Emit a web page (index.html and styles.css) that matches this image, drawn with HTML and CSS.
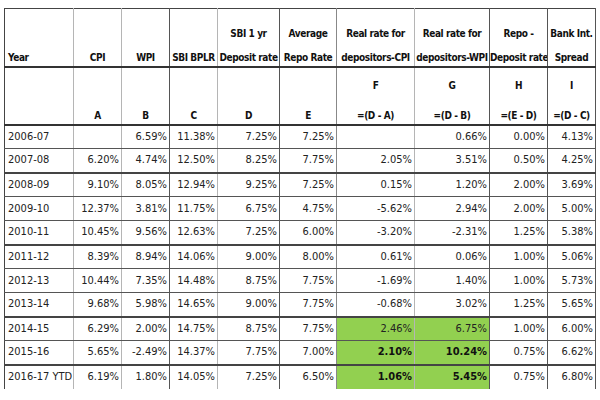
FILE: index.html
```html
<!DOCTYPE html>
<html>
<head>
<meta charset="utf-8">
<link rel="stylesheet" href="styles.css">
</head>
<body>
<div class="wrap">
<table class="grid">
  <colgroup>
    <col class="c-year"><col class="c-48"><col class="c-48"><col class="c-48"><col class="c-62"><col class="c-57"><col class="c-78"><col class="c-75"><col class="c-58"><col class="c-48">
  </colgroup>
  <thead>
    <tr class="h1">
      <th class="left"><span class="ln">Year</span></th>
      <th><span class="ln">CPI</span></th>
      <th><span class="ln">WPI</span></th>
      <th><span class="ln">SBI BPLR</span></th>
      <th><span class="ln">SBI 1 yr</span><span class="ln">Deposit rate</span></th>
      <th><span class="ln">Average</span><span class="ln">Repo Rate</span></th>
      <th><span class="ln">Real rate for</span><span class="ln">depositors-CPI</span></th>
      <th><span class="ln">Real rate for</span><span class="ln">depositors-WPI</span></th>
      <th><span class="ln">Repo -</span><span class="ln">Deposit rate</span></th>
      <th><span class="ln">Bank Int.</span><span class="ln">Spread</span></th>
    </tr>
    <tr class="h2">
      <th></th>
      <th><span class="ln">A</span></th>
      <th><span class="ln">B</span></th>
      <th><span class="ln">C</span></th>
      <th><span class="ln">D</span></th>
      <th><span class="ln">E</span></th>
      <th><span class="ln">F</span><span class="ln">=(D - A)</span></th>
      <th><span class="ln">G</span><span class="ln">=(D - B)</span></th>
      <th><span class="ln">H</span><span class="ln">=(E - D)</span></th>
      <th><span class="ln">I</span><span class="ln">=(D - C)</span></th>
    </tr>
  </thead>
  <tbody>
    <tr><td>2006-07</td><td></td><td>6.59%</td><td>11.38%</td><td>7.25%</td><td>7.25%</td><td></td><td>0.66%</td><td>0.00%</td><td>4.13%</td></tr>
    <tr class="thick"><td>2007-08</td><td>6.20%</td><td>4.74%</td><td>12.50%</td><td>8.25%</td><td>7.75%</td><td>2.05%</td><td>3.51%</td><td>0.50%</td><td>4.25%</td></tr>
    <tr><td>2008-09</td><td>9.10%</td><td>8.05%</td><td>12.94%</td><td>9.25%</td><td>7.25%</td><td>0.15%</td><td>1.20%</td><td>2.00%</td><td>3.69%</td></tr>
    <tr><td>2009-10</td><td>12.37%</td><td>3.81%</td><td>11.75%</td><td>6.75%</td><td>4.75%</td><td>-5.62%</td><td>2.94%</td><td>2.00%</td><td>5.00%</td></tr>
    <tr class="thick"><td>2010-11</td><td>10.45%</td><td>9.56%</td><td>12.63%</td><td>7.25%</td><td>6.00%</td><td>-3.20%</td><td>-2.31%</td><td>1.25%</td><td>5.38%</td></tr>
    <tr><td>2011-12</td><td>8.39%</td><td>8.94%</td><td>14.06%</td><td>9.00%</td><td>8.00%</td><td>0.61%</td><td>0.06%</td><td>1.00%</td><td>5.06%</td></tr>
    <tr><td>2012-13</td><td>10.44%</td><td>7.35%</td><td>14.48%</td><td>8.75%</td><td>7.75%</td><td>-1.69%</td><td>1.40%</td><td>1.00%</td><td>5.73%</td></tr>
    <tr class="thick"><td>2013-14</td><td>9.68%</td><td>5.98%</td><td>14.65%</td><td>9.00%</td><td>7.75%</td><td>-0.68%</td><td>3.02%</td><td>1.25%</td><td>5.65%</td></tr>
    <tr><td>2014-15</td><td>6.29%</td><td>2.00%</td><td>14.75%</td><td>8.75%</td><td>7.75%</td><td class="g">2.46%</td><td class="g">6.75%</td><td>1.00%</td><td>6.00%</td></tr>
    <tr class="thick"><td>2015-16</td><td>5.65%</td><td>-2.49%</td><td>14.37%</td><td>7.75%</td><td>7.00%</td><td class="g b">2.10%</td><td class="g b">10.24%</td><td>0.75%</td><td>6.62%</td></tr>
    <tr class="last"><td>2016-17 YTD</td><td>6.19%</td><td>1.80%</td><td>14.05%</td><td>7.25%</td><td>6.50%</td><td class="g b">1.06%</td><td class="g b">5.45%</td><td>0.75%</td><td>6.80%</td></tr>
  </tbody>
</table>
</div>
</body>
</html>
```
FILE: styles.css
```css
html, body {
  margin: 0;
  padding: 0;
  background: #ffffff;
}

.wrap {
  padding: 8px 0 0 4px;
}

.grid {
  border-collapse: collapse;
  table-layout: fixed;
  width: 591px;
  font-family: "DejaVu Sans Condensed", "DejaVu Sans", sans-serif;
  font-stretch: condensed;
  font-size: 11px;
  color: #222;
}

.c-year { width: 69px; }
.c-48 { width: 48px; }
.c-62 { width: 62px; }
.c-57 { width: 57px; }
.c-78 { width: 78px; }
.c-75 { width: 75px; }
.c-58 { width: 58px; }

.grid th,
.grid td {
  padding: 0 2px;
  border-right: 1px solid #b5b5b5;
  white-space: nowrap;
  overflow: hidden;
}

.grid th:first-child,
.grid td:first-child {
  border-left: 1px solid #444;
}

.grid th:nth-child(3),
.grid td:nth-child(3),
.grid th:nth-child(5),
.grid td:nth-child(5),
.grid th:nth-child(8),
.grid td:nth-child(8),
.grid th:nth-child(9),
.grid td:nth-child(9),
.grid th:nth-child(10),
.grid td:nth-child(10) {
  border-right-color: #555;
}

.grid th:nth-child(6),
.grid td:nth-child(6) {
  border-right-color: #888;
}

.grid th {
  font-size: 10px;
  font-weight: bold;
  letter-spacing: -0.4px;
  color: #111;
  text-align: center;
  vertical-align: bottom;
  padding: 0 0 1px;
  border-bottom: 2px solid #333;
}

.grid th.left {
  text-align: left;
  padding-left: 3px;
}

.ln {
  display: block;
  line-height: 14px;
}

.h1 th {
  border-top: 1px solid #444;
}

.h1 {
  height: 58px;
}

.h1 .ln + .ln {
  margin-top: 10px;
}

.h2 {
  height: 58px;
}

.h2 .ln + .ln {
  margin-top: 16px;
}

.grid tbody tr {
  height: 24px;
}

.grid td {
  text-align: right;
  vertical-align: middle;
  line-height: 16px;
  border-bottom: 1px solid #555;
}

.grid td:first-child {
  text-align: left;
  padding-left: 3px;
}

.grid tr.thick td {
  border-bottom: 2px solid #444;
}

.grid tr.last td {
  border-bottom: none;
}

.grid td.g {
  background: #92d050;
}

.grid td.b {
  font-weight: bold;
  color: #111;
}
```
